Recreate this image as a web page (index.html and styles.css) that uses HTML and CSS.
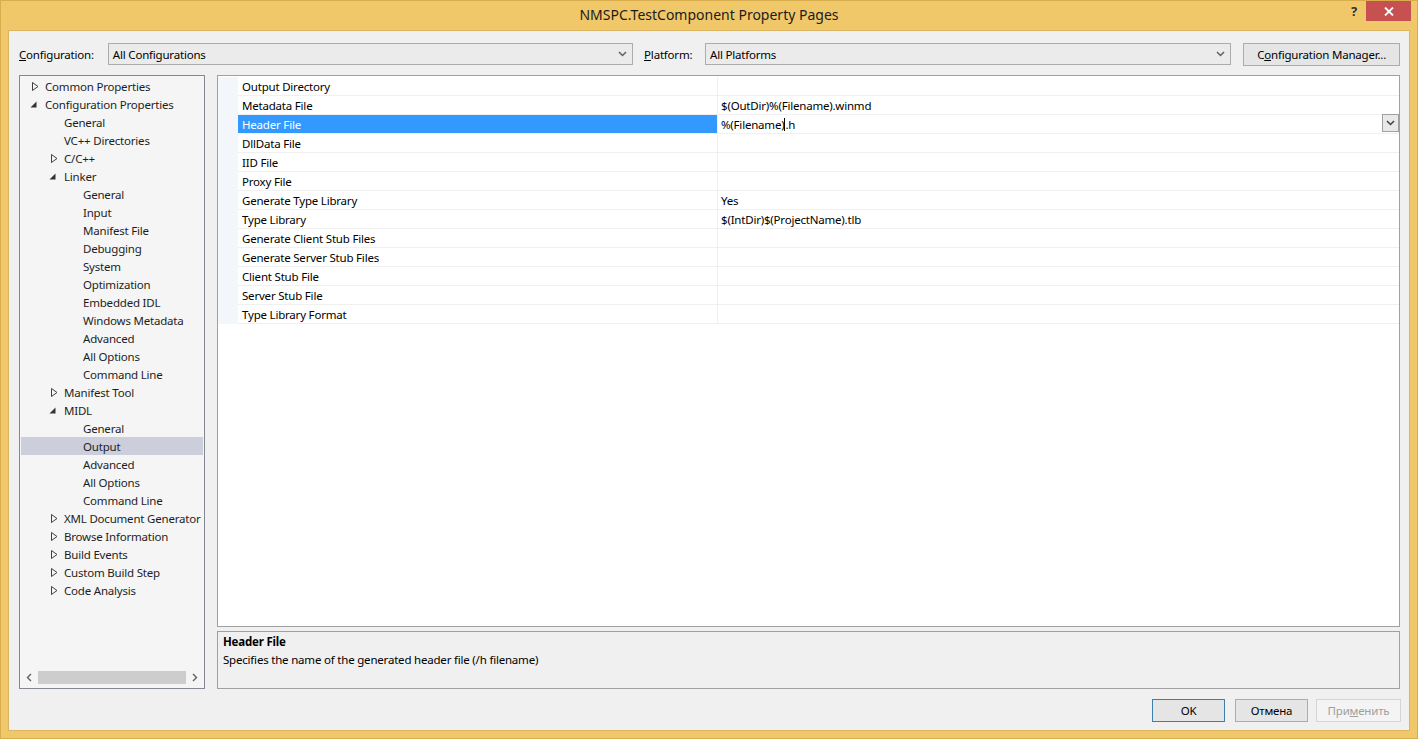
FILE: index.html
```html
<!DOCTYPE html>
<html lang="en">
  <head>
    <meta charset="UTF-8" />
    <title>NMSPC.TestComponent Property Pages</title>
    <link rel="stylesheet" href="styles.css">
  </head>
  <body>
    <div class="window">
      <div class="titlebar">
        <div class="title">NMSPC.TestComponent Property Pages</div>
        <div class="caption-buttons">
          <span class="help-btn">?</span>
          <span class="close-btn">
            <svg width="10" height="9" viewBox="0 0 10 9"><path d="M1 0.5 L9 8.5 M9 0.5 L1 8.5" stroke="#fff" stroke-width="1.8" /></svg>
          </span>
        </div>
      </div>

      <div class="client">
        <div class="config-row">
          <label class="config-label"><u>C</u>onfiguration:</label>
          <div class="combo combo-config">
            <span>All Configurations</span>
            <svg class="chevron" width="9" height="6" viewBox="0 0 9 6"><path d="M1 1 L4.5 4.5 L8 1" fill="none" stroke="#606060" stroke-width="1.5" /></svg>
          </div>
          <label class="platform-label"><u>P</u>latform:</label>
          <div class="combo combo-platform">
            <span>All Platforms</span>
            <svg class="chevron" width="9" height="6" viewBox="0 0 9 6"><path d="M1 1 L4.5 4.5 L8 1" fill="none" stroke="#606060" stroke-width="1.5" /></svg>
          </div>
          <button class="btn btn-manager">C<u>o</u>nfiguration Manager...</button>
        </div>

        <div class="main">
          <div class="tree">
            <div class="tree-items" id="tree"></div>
            <div class="hscroll">
              <svg width="17" height="17" viewBox="0 0 17 17"><path d="M10 5 L6.5 8.5 L10 12" fill="none" stroke="#606060" stroke-width="1.4" /></svg>
              <div class="hscroll-track"><div class="hscroll-thumb"></div></div>
              <svg width="17" height="17" viewBox="0 0 17 17"><path d="M7 5 L10.5 8.5 L7 12" fill="none" stroke="#606060" stroke-width="1.4" /></svg>
            </div>
          </div>

          <div class="right-pane">
            <div class="grid" id="grid"></div>
            <div class="description">
              <div class="desc-title">Header File</div>
              <div class="desc-text">Specifies the name of the generated header file (/h filename)</div>
            </div>
          </div>
        </div>

        <div class="button-row">
          <button class="btn btn-ok">OK</button>
          <button class="btn btn-cancel">Отмена</button>
          <button class="btn btn-apply" disabled>При<u>м</u>енить</button>
        </div>
      </div>
    </div>

    <script>
      const treeData = [
        [0, "closed", "Common Properties"],
        [0, "open", "Configuration Properties"],
        [1, "", "General"],
        [1, "", "VC++ Directories"],
        [1, "closed", "C/C++"],
        [1, "open", "Linker"],
        [2, "", "General"],
        [2, "", "Input"],
        [2, "", "Manifest File"],
        [2, "", "Debugging"],
        [2, "", "System"],
        [2, "", "Optimization"],
        [2, "", "Embedded IDL"],
        [2, "", "Windows Metadata"],
        [2, "", "Advanced"],
        [2, "", "All Options"],
        [2, "", "Command Line"],
        [1, "closed", "Manifest Tool"],
        [1, "open", "MIDL"],
        [2, "", "General"],
        [2, "", "Output", true],
        [2, "", "Advanced"],
        [2, "", "All Options"],
        [2, "", "Command Line"],
        [1, "closed", "XML Document Generator"],
        [1, "closed", "Browse Information"],
        [1, "closed", "Build Events"],
        [1, "closed", "Custom Build Step"],
        [1, "closed", "Code Analysis"],
      ]

      const arrows = {
        closed: '<svg width="7" height="9" viewBox="0 0 7 9"><path d="M0.5 0.5 L6 4.5 L0.5 8.5 Z" fill="none" stroke="#404040" stroke-width="1" /></svg>',
        open: '<svg width="7" height="7" viewBox="0 0 7 7"><path d="M6.5 0.5 L6.5 6.5 L0.5 6.5 Z" fill="#333" /></svg>',
      }

      const tree = document.getElementById("tree")
      treeData.forEach(([depth, state, label, selected]) => {
        const row = document.createElement("div")
        row.className = "tree-row" + (selected ? " selected" : "")
        row.style.paddingLeft = `${8 + depth * 19}px`
        row.innerHTML = `<span class="arrow ${state}">${arrows[state] || ""}</span><span>${label}</span>`
        tree.appendChild(row)
      })

      const props = [
        ["Output Directory", ""],
        ["Metadata File", "$(OutDir)%(Filename).winmd"],
        ["Header File", "%(Filename).h", true],
        ["DllData File", ""],
        ["IID File", ""],
        ["Proxy File", ""],
        ["Generate Type Library", "Yes"],
        ["Type Library", "$(IntDir)$(ProjectName).tlb"],
        ["Generate Client Stub Files", ""],
        ["Generate Server Stub Files", ""],
        ["Client Stub File", ""],
        ["Server Stub File", ""],
        ["Type Library Format", ""],
      ]

      const grid = document.getElementById("grid")
      props.forEach(([name, value, selected]) => {
        const row = document.createElement("div")
        row.className = "grid-row" + (selected ? " selected" : "")
        let valueHtml = value
        if (selected) {
          valueHtml = `%(Filename)<span class="caret"></span>.h
            <span class="drop-btn"><svg width="9" height="6" viewBox="0 0 9 6"><path d="M1 1 L4.5 4.5 L8 1" fill="none" stroke="#404040" stroke-width="1.5" /></svg></span>`
        }
        row.innerHTML = `<div class="gutter"></div><div class="name">${name}</div><div class="value">${valueHtml}</div>`
        grid.appendChild(row)
      })
    </script>
  </body>
</html>
```

FILE: styles.css
```css
body {
  margin: 0;
  font-family: "Noto Sans", sans-serif;
  font-size: 11.5px;
  letter-spacing: -0.2px;
  color: #000;
  background-color: #f0c869;
}
.window {
  width: 1418px;
  height: 739px;
  display: flex;
  flex-direction: column;
  box-sizing: border-box;
  border: 1px solid #d7ad4d;
}
.titlebar {
  height: 30px;
  position: relative;
  display: flex;
  align-items: center;
  justify-content: center;
}
.title {
  font-size: 14px;
  letter-spacing: 0;
  color: #1b1b1b;
  margin-top: -2px;
}
.caption-buttons {
  position: absolute;
  top: 0;
  right: 6px;
  display: flex;
  align-items: flex-start;
}
.help-btn {
  font-weight: bold;
  font-size: 13px;
  color: #303030;
  width: 24px;
  text-align: center;
  margin-top: 1px;
}
.close-btn {
  width: 45px;
  height: 20px;
  background-color: #c75050;
  display: flex;
  align-items: center;
  justify-content: center;
}
.client {
  flex: 1;
  margin: 0 7px 7px 7px;
  background-color: #f0f0f0;
  border: 1px solid #dcb563;
  padding: 12px 9px 8px 10px;
  display: flex;
  flex-direction: column;
}
.config-row {
  display: flex;
  align-items: center;
  height: 22px;
}
.config-label {
  width: 89px;
}
.combo {
  height: 22px;
  box-sizing: border-box;
  border: 1px solid #acacac;
  background-color: #ebebeb;
  display: flex;
  align-items: center;
  justify-content: space-between;
  padding: 0 5px 0 4px;
}
.combo-config {
  width: 526px;
}
.platform-label {
  margin-left: 11px;
  width: 61px;
}
.combo-platform {
  width: 527px;
}
.btn {
  font-family: "Noto Sans", sans-serif;
  font-size: 11.5px;
  letter-spacing: -0.2px;
  color: #000;
  box-sizing: border-box;
  border: 1px solid #acacac;
  background-color: #e5e5e5;
  padding: 0;
  height: 23px;
}
.btn-manager {
  margin-left: 12px;
  width: 157px;
}
.main {
  display: flex;
  gap: 12px;
  margin-top: 10px;
  height: 614px;
}
.tree {
  width: 186px;
  flex-shrink: 0;
  box-sizing: border-box;
  border: 1px solid #828790;
  background-color: #f5f5f5;
  display: flex;
  flex-direction: column;
  padding: 1px;
}
.tree-items {
  flex: 1;
  overflow: hidden;
}
.tree-row {
  height: 18px;
  display: flex;
  align-items: center;
  white-space: nowrap;
  color: #1e1e1e;
}
.tree-row.selected {
  background-color: #cccedb;
}
.arrow {
  width: 16px;
  flex-shrink: 0;
  display: flex;
  align-items: center;
  padding-left: 3px;
  box-sizing: border-box;
}
.arrow.open {
  padding-left: 1px;
}
.hscroll {
  height: 17px;
  display: flex;
  align-items: center;
  margin: 0 0 1px 0;
}
.hscroll-track {
  flex: 1;
  height: 17px;
  display: flex;
  align-items: center;
}
.hscroll-thumb {
  width: 100%;
  height: 13px;
  background-color: #cdcdcd;
}
.right-pane {
  flex: 1;
  display: flex;
  flex-direction: column;
  gap: 4px;
}
.grid {
  height: 552px;
  box-sizing: border-box;
  border: 1px solid #a0a0a0;
  background-color: #fff;
  padding-top: 1px;
}
.grid-row {
  display: flex;
  height: 19px;
  box-sizing: border-box;
  border-bottom: 1px solid #f0f0f0;
}
.gutter {
  width: 20px;
  background-color: #f3f6fb;
  margin-bottom: -1px;
}
.name {
  width: 480px;
  padding-left: 4px;
  box-sizing: border-box;
  border-right: 1px solid #f0f0f0;
  display: flex;
  align-items: center;
  white-space: nowrap;
}
.value {
  flex: 1;
  padding-left: 3px;
  display: flex;
  align-items: center;
  position: relative;
}
.grid-row.selected .name {
  background-color: #3399ff;
  color: #fff;
}
.caret {
  display: inline-block;
  width: 1px;
  height: 13px;
  background-color: #000;
}
.drop-btn {
  position: absolute;
  right: 0;
  top: -1px;
  width: 17px;
  height: 18px;
  box-sizing: border-box;
  border: 1px solid #a0a0a0;
  background-color: #e8e8e8;
  display: flex;
  align-items: center;
  justify-content: center;
}
.description {
  flex: 1;
  box-sizing: border-box;
  border: 1px solid #a0a0a0;
  background-color: #f0f0f0;
  padding: 1px 5px;
}
.desc-title {
  font-weight: bold;
  line-height: 18px;
}
.desc-text {
  line-height: 18px;
}
.button-row {
  display: flex;
  justify-content: flex-end;
  margin-top: 10px;
  gap: 10px;
}
.btn-ok {
  width: 73px;
  border-color: #3c7fb1;
}
.btn-cancel {
  width: 73px;
}
.btn-apply {
  width: 85px;
  margin-left: -2px;
  margin-right: -1px;
  color: #a0a0a0;
  border-color: #d5d5d5;
  background-color: #f4f4f4;
}
```
